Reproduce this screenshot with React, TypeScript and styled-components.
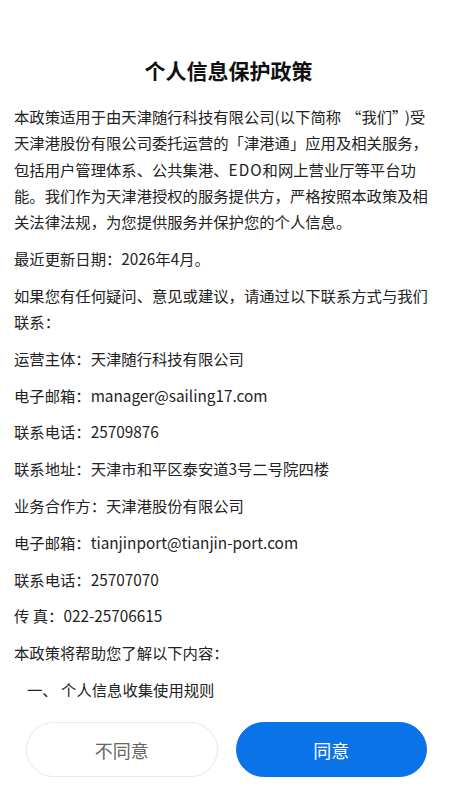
import styled, { createGlobalStyle } from "styled-components";

const GlobalStyle = createGlobalStyle`
    html, body {
        margin: 0;
        padding: 0;
        background: #ffffff;
    }
    * {
        box-sizing: border-box;
    }
`;

const Page = styled.div`
    height: 100vh;
    display: flex;
    flex-direction: column;
    background: #ffffff;
    font-family: "Noto Sans CJK SC", "Noto Sans", sans-serif;
    color: #222222;
`;

const Content = styled.div`
    flex: 1;
    overflow: hidden;
    padding: 55px 28px 0 14px;
`;

const Title = styled.h1`
    margin: 0 -14px 18px 0;
    font-size: 21px;
    line-height: 30px;
    font-weight: 700;
    text-align: center;
    color: #111111;
`;

const Paragraph = styled.p<{ indent?: boolean }>`
    margin: 0 0 10.5px;
    font-size: 15.33px;
    line-height: 26.3px;
    white-space: nowrap;
    padding-left: ${(p) => (p.indent ? "13px" : "0")};
`;

const Wrapped = styled(Paragraph)`
    white-space: normal;
`;

// full-width quote marks: open quote sits right in its box, close quote left
const Quote = styled.span<{ close?: boolean }>`
    margin-left: ${(p) => (p.close ? "0" : "5px")};
    margin-right: ${(p) => (p.close ? "5px" : "0")};
`;

const Latin = styled.span`
    letter-spacing: 1px;
`;

const Footer = styled.div`
    display: grid;
    grid-template-columns: 1fr 1fr;
    gap: 18px;
    padding: 12px 30px 32px 26px;
`;

const Button = styled.button<{ primary?: boolean }>`
    height: 55px;
    border-radius: 28px;
    font-family: inherit;
    font-size: 18px;
    cursor: pointer;
    border: 1px solid ${(p) => (p.primary ? "#0b73e8" : "#e8e8e8")};
    background: ${(p) => (p.primary ? "#0b73e8" : "#ffffff")};
    color: ${(p) => (p.primary ? "#ffffff" : "#666666")};
`;

const contacts = [
    "运营主体：天津随行科技有限公司",
    "电子邮箱：manager@sailing17.com",
    "联系电话：25709876",
    "联系地址：天津市和平区泰安道3号二号院四楼",
    "业务合作方：天津港股份有限公司",
    "电子邮箱：tianjinport@tianjin-port.com",
    "联系电话：25707070",
    "传 真：022-25706615",
    "本政策将帮助您了解以下内容：",
];

const App = () => {
    return (
        <Page lang="zh-CN">
            <GlobalStyle />
            <Content>
                <Title>个人信息保护政策</Title>
                <Wrapped>
                    本政策适用于由天津随行科技有限公司(以下简称<Quote>“</Quote>我们<Quote close>”</Quote>)受天津港股份有限公司委托运营的「津港通」应用及相关服务，包括用户管理体系、公共集港、<Latin>EDO</Latin>和网上营业厅等平台功能。我们作为天津港授权的服务提供方，严格按照本政策及相关法律法规，为您提供服务并保护您的个人信息。
                </Wrapped>
                <Paragraph>最近更新日期：2026年4月。</Paragraph>
                <Wrapped>如果您有任何疑问、意见或建议，请通过以下联系方式与我们联系：</Wrapped>
                {contacts.map((line) => (
                    <Paragraph key={line}>{line}</Paragraph>
                ))}
                <Paragraph indent>一、 个人信息收集使用规则</Paragraph>
            </Content>
            <Footer>
                <Button>不同意</Button>
                <Button primary>同意</Button>
            </Footer>
        </Page>
    );
};

export default App;
